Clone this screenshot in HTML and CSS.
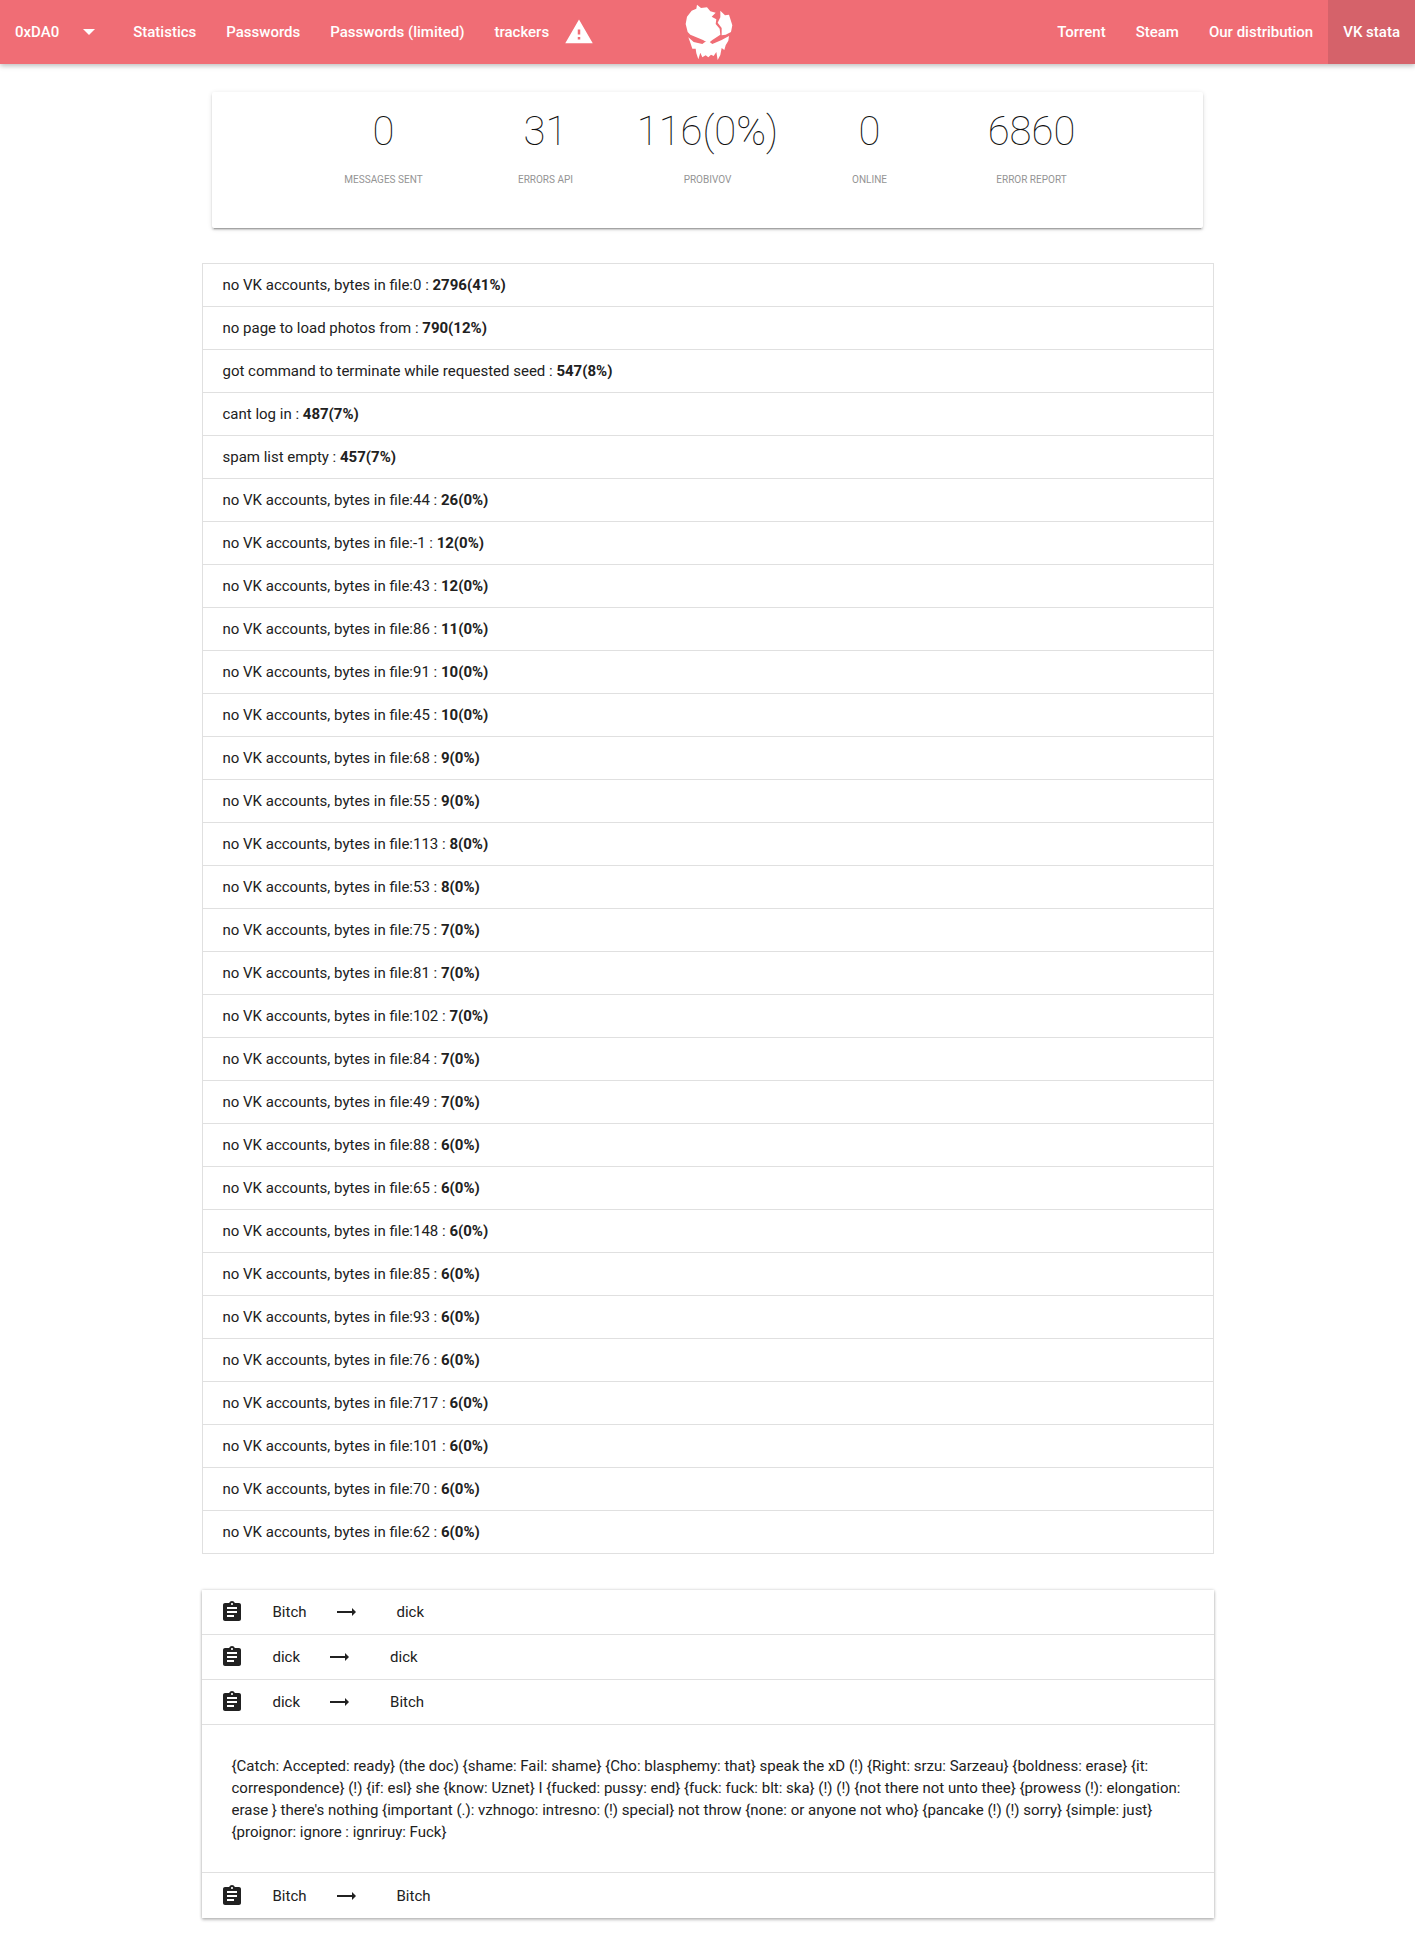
FILE: index.html
```html
<!DOCTYPE html>
<html lang="en">
<head>
<meta charset="utf-8">
<title>0xDA0</title>
<link rel="stylesheet" href="styles.css">
</head>
<body>
<header class="navbar">
  <nav class="nav-left">
    <a class="nav-link nav-brand">0xDA0<span class="caret"></span></a>
    <a class="nav-link">Statistics</a>
    <a class="nav-link">Passwords</a>
    <a class="nav-link">Passwords (limited)</a>
    <a class="nav-link">trackers</a>
    <svg class="warn-icon" viewBox="0 0 24 24"><path d="M1 21h22L12 2 1 21zm12-3h-2v-2h2v2zm0-4h-2v-4h2v4z"/></svg>
  </nav>
  <svg class="logo" viewBox="0 0 180 192">
    <path d="M54 14 L66 24 L84 22 L94 34 L110 38 L98 50 L112 58 L110 72 L122 86 L124 104 L100 120 L88 130 L72 120 L34 104 L26 96 L20 72 L24 50 L38 32 L52 26 Z"/>
    <path d="M124 32 L138 46 L150 44 L160 76 L156 96 L140 104 L128 106 L128 84 L116 68 L124 52 Z"/>
    <path d="M28 112 L44 126 L70 132 L78 126 L92 126 L100 132 L128 120 L150 108 L148 122 L140 136 L136 150 L128 144 L124 165 L116 180 L112 156 L104 168 L96 164 L88 172 L80 166 L70 172 L64 158 L58 178 L52 160 L50 146 L40 146 L34 128 Z"/>
  </svg>
  <nav class="nav-right">
    <a class="nav-link">Torrent</a>
    <a class="nav-link">Steam</a>
    <a class="nav-link">Our distribution</a>
    <a class="nav-link nav-active">VK stata</a>
  </nav>
</header>

<section class="stats-card">
  <div class="stats-row">
    <div class="stat"><div class="stat-num">0</div><div class="stat-label">Messages sent</div></div>
    <div class="stat"><div class="stat-num">31</div><div class="stat-label">Errors API</div></div>
    <div class="stat"><div class="stat-num">116(0%)</div><div class="stat-label">Probivov</div></div>
    <div class="stat"><div class="stat-num">0</div><div class="stat-label">Online</div></div>
    <div class="stat"><div class="stat-num">6860</div><div class="stat-label">Error report</div></div>
  </div>
</section>

<ul class="error-list">
  <li>no VK accounts, bytes in file:0 : <b>2796(41%)</b></li>
  <li>no page to load photos from : <b>790(12%)</b></li>
  <li>got command to terminate while requested seed : <b>547(8%)</b></li>
  <li>cant log in : <b>487(7%)</b></li>
  <li>spam list empty : <b>457(7%)</b></li>
  <li>no VK accounts, bytes in file:44 : <b>26(0%)</b></li>
  <li>no VK accounts, bytes in file:-1 : <b>12(0%)</b></li>
  <li>no VK accounts, bytes in file:43 : <b>12(0%)</b></li>
  <li>no VK accounts, bytes in file:86 : <b>11(0%)</b></li>
  <li>no VK accounts, bytes in file:91 : <b>10(0%)</b></li>
  <li>no VK accounts, bytes in file:45 : <b>10(0%)</b></li>
  <li>no VK accounts, bytes in file:68 : <b>9(0%)</b></li>
  <li>no VK accounts, bytes in file:55 : <b>9(0%)</b></li>
  <li>no VK accounts, bytes in file:113 : <b>8(0%)</b></li>
  <li>no VK accounts, bytes in file:53 : <b>8(0%)</b></li>
  <li>no VK accounts, bytes in file:75 : <b>7(0%)</b></li>
  <li>no VK accounts, bytes in file:81 : <b>7(0%)</b></li>
  <li>no VK accounts, bytes in file:102 : <b>7(0%)</b></li>
  <li>no VK accounts, bytes in file:84 : <b>7(0%)</b></li>
  <li>no VK accounts, bytes in file:49 : <b>7(0%)</b></li>
  <li>no VK accounts, bytes in file:88 : <b>6(0%)</b></li>
  <li>no VK accounts, bytes in file:65 : <b>6(0%)</b></li>
  <li>no VK accounts, bytes in file:148 : <b>6(0%)</b></li>
  <li>no VK accounts, bytes in file:85 : <b>6(0%)</b></li>
  <li>no VK accounts, bytes in file:93 : <b>6(0%)</b></li>
  <li>no VK accounts, bytes in file:76 : <b>6(0%)</b></li>
  <li>no VK accounts, bytes in file:717 : <b>6(0%)</b></li>
  <li>no VK accounts, bytes in file:101 : <b>6(0%)</b></li>
  <li>no VK accounts, bytes in file:70 : <b>6(0%)</b></li>
  <li>no VK accounts, bytes in file:62 : <b>6(0%)</b></li>
</ul>

<section class="spam-card">
  <div class="spam-row">
    <svg class="clip-icon" viewBox="0 0 24 24"><path d="M19 3h-4.18C14.4 1.84 13.3 1 12 1c-1.3 0-2.4.84-2.82 2H5c-1.1 0-2 .9-2 2v14c0 1.1.9 2 2 2h14c1.1 0 2-.9 2-2V5c0-1.1-.9-2-2-2zm-7 0c.55 0 1 .45 1 1s-.45 1-1 1-1-.45-1-1 .45-1 1-1zm2 14H7v-2h7v2zm3-4H7v-2h10v2zm0-4H7V7h10v2z"/></svg>
    <span>Bitch</span>
    <svg class="arrow-icon" viewBox="0 0 24 24"><path d="M22 12l-4-4v3H3v2h15v3z"/></svg>
    <span>dick</span>
  </div>
  <div class="spam-row">
    <svg class="clip-icon" viewBox="0 0 24 24"><path d="M19 3h-4.18C14.4 1.84 13.3 1 12 1c-1.3 0-2.4.84-2.82 2H5c-1.1 0-2 .9-2 2v14c0 1.1.9 2 2 2h14c1.1 0 2-.9 2-2V5c0-1.1-.9-2-2-2zm-7 0c.55 0 1 .45 1 1s-.45 1-1 1-1-.45-1-1 .45-1 1-1zm2 14H7v-2h7v2zm3-4H7v-2h10v2zm0-4H7V7h10v2z"/></svg>
    <span>dick</span>
    <svg class="arrow-icon" viewBox="0 0 24 24"><path d="M22 12l-4-4v3H3v2h15v3z"/></svg>
    <span>dick</span>
  </div>
  <div class="spam-row">
    <svg class="clip-icon" viewBox="0 0 24 24"><path d="M19 3h-4.18C14.4 1.84 13.3 1 12 1c-1.3 0-2.4.84-2.82 2H5c-1.1 0-2 .9-2 2v14c0 1.1.9 2 2 2h14c1.1 0 2-.9 2-2V5c0-1.1-.9-2-2-2zm-7 0c.55 0 1 .45 1 1s-.45 1-1 1-1-.45-1-1 .45-1 1-1zm2 14H7v-2h7v2zm3-4H7v-2h10v2zm0-4H7V7h10v2z"/></svg>
    <span>dick</span>
    <svg class="arrow-icon" viewBox="0 0 24 24"><path d="M22 12l-4-4v3H3v2h15v3z"/></svg>
    <span>Bitch</span>
  </div>
  <p class="spam-text">{Catch: Accepted: ready} (the doc) {shame: Fail: shame} {Cho: blasphemy: that} speak the xD (!) {Right: srzu: Sarzeau} {boldness: erase} {it: correspondence} (!) {if: esl} she {know: Uznet} I {fucked: pussy: end} {fuck: fuck: blt: ska} (!) (!) {not there not unto thee} {prowess (!): elongation: erase } there's nothing {important (.): vzhnogo: intresno: (!) special} not throw {none: or anyone not who} {pancake (!) (!) sorry} {simple: just} {proignor: ignore : ignriruy: Fuck}</p>
  <div class="spam-row">
    <svg class="clip-icon" viewBox="0 0 24 24"><path d="M19 3h-4.18C14.4 1.84 13.3 1 12 1c-1.3 0-2.4.84-2.82 2H5c-1.1 0-2 .9-2 2v14c0 1.1.9 2 2 2h14c1.1 0 2-.9 2-2V5c0-1.1-.9-2-2-2zm-7 0c.55 0 1 .45 1 1s-.45 1-1 1-1-.45-1-1 .45-1 1-1zm2 14H7v-2h7v2zm3-4H7v-2h10v2zm0-4H7V7h10v2z"/></svg>
    <span>Bitch</span>
    <svg class="arrow-icon" viewBox="0 0 24 24"><path d="M22 12l-4-4v3H3v2h15v3z"/></svg>
    <span>Bitch</span>
  </div>
</section>
</body>
</html>
```
FILE: styles.css
```css
* { box-sizing: border-box; }
html, body { margin: 0; padding: 0; background: #fff; }
body {
  font-family: Roboto, "Liberation Sans", sans-serif;
  font-size: 15px;
  color: #212121;
  padding-bottom: 36px;
}
.navbar {
  height: 64px;
  background: #f06d75;
  display: grid;
  grid-template-columns: 1fr auto 1fr;
  box-shadow: 0 2px 5px rgba(0, 0, 0, .26);
  color: #fff;
}
.nav-left, .nav-right { display: flex; align-items: stretch; }
.nav-right { justify-content: flex-end; }
.nav-link {
  display: flex;
  align-items: center;
  padding: 0 15px;
  font-weight: 500;
  font-size: 15px;
}
.nav-brand { padding-right: 23px; }
.nav-active { background: #d5626a; }
.caret {
  width: 0;
  height: 0;
  margin-left: 24px;
  border-left: 6px solid transparent;
  border-right: 6px solid transparent;
  border-top: 6px solid #fff;
}
.warn-icon { width: 30px; height: 30px; fill: #fff; align-self: center; }
.logo { width: 60px; height: 64px; fill: #fff; margin-left: 2px; }

.stats-card {
  width: 991px;
  height: 136px;
  margin: 28px auto 0;
  border-radius: 2px;
  background: #fff;
  box-shadow: 0 2px 2px rgba(0, 0, 0, .14), 0 3px 1px -2px rgba(0, 0, 0, .2), 0 1px 5px rgba(0, 0, 0, .12);
}
.stats-row {
  width: 810px;
  margin: 0 auto;
  display: grid;
  grid-template-columns: repeat(5, 1fr);
  padding-top: 16px;
  text-align: center;
}
.stat-num { font-size: 40px; font-weight: 100; line-height: 48px; color: #111; }
.stat-label {
  margin-top: 17px;
  font-size: 10px;
  line-height: 14px;
  text-transform: uppercase;
  color: #949494;
}

.error-list {
  list-style: none;
  width: 1012px;
  margin: 35px auto 0;
  padding: 0;
  border: 1px solid #e0e0e0;
  border-bottom: 0;
}
.error-list li {
  height: 43px;
  line-height: 42px;
  padding: 0 20px;
  border-bottom: 1px solid #e0e0e0;
}
.error-list b { font-weight: 700; }

.spam-card {
  width: 1012px;
  margin: 36px auto 0;
  background: #fff;
  box-shadow: 0 2px 3px rgba(0, 0, 0, .22), 0 0 3px rgba(0, 0, 0, .2);
}
.spam-row {
  display: flex;
  align-items: center;
  height: 45px;
  padding-left: 18px;
  border-bottom: 1px solid #e0e0e0;
}
.spam-row:last-child { border-bottom: 0; }
.clip-icon { width: 24px; height: 24px; fill: #212121; margin-right: 29px; }
.arrow-icon { width: 24px; height: 24px; fill: #212121; margin: 0 39px 0 27px; }
.spam-text {
  margin: 0;
  padding: 30px 30px 29px;
  line-height: 22px;
  border-bottom: 1px solid #e0e0e0;
}
```
